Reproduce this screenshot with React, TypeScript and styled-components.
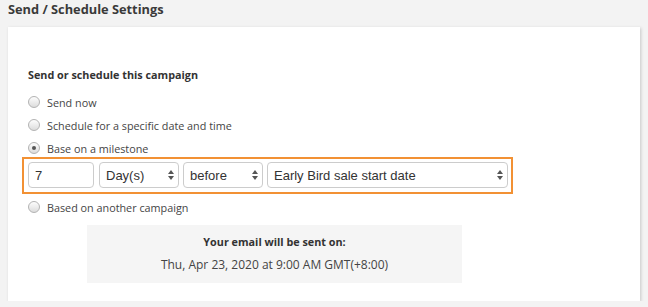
import * as React from "react"
import styled, { createGlobalStyle } from "styled-components"

const Global = createGlobalStyle`
  html, body {
    margin: 0;
    padding: 0;
    background: #f3f3f3;
  }
  body {
    font-family: "Open Sans", "Liberation Sans", sans-serif;
    color: #333;
  }
`

const Page = styled.div`
  display: flex;
  flex-direction: column;
  padding: 0 8px;
  width: 632px;
`

const Title = styled.h2`
  margin: 0;
  height: 27px;
  font-size: 12.8px;
  line-height: 18px;
  font-weight: 700;
  color: #3a3a3a;
`

const Card = styled.div`
  background: #fff;
  box-shadow: 1px 1px 3px rgba(0, 0, 0, 0.18);
  padding: 39px 20px 18px 20px;
  display: flex;
  flex-direction: column;
`

const Heading = styled.div`
  font-size: 10.8px;
  line-height: 18px;
  font-weight: 700;
  color: #333;
  margin-bottom: 9px;
`

const Options = styled.div`
  display: flex;
  flex-direction: column;
  gap: 5px;
`

const Option = styled.label`
  display: flex;
  align-items: center;
  height: 18px;
  gap: 7px;
  font-size: 10.8px;
  color: #444;
`

const Radio = styled.span<{ $checked?: boolean }>`
  width: 10px;
  height: 10px;
  border-radius: 50%;
  border: 1px solid #b3b3b3;
  background: linear-gradient(#fdfdfd, #dcdcdc);
  display: flex;
  align-items: center;
  justify-content: center;
  flex: none;

  &::after {
    content: "";
    display: ${(p) => (p.$checked ? "block" : "none")};
    width: 4px;
    height: 4px;
    border-radius: 50%;
    background: #555;
  }
`

const Milestone = styled.div`
  align-self: flex-start;
  display: flex;
  gap: 4px;
  margin-left: -6px;
  padding: 3px 3px 4px 4px;
  border: 2px solid #f29134;
`

const Field = styled.input`
  box-sizing: border-box;
  width: 66px;
  height: 26px;
  margin-right: 1px;
  padding: 0 6px;
  border: 1px solid #cccccc;
  border-radius: 4px;
  font-family: "Liberation Sans", Arial, sans-serif;
  font-size: 13px;
  color: #333;
  outline: none;
`

const SelectWrap = styled.div<{ $w: number }>`
  position: relative;
  width: ${(p) => p.$w}px;
  height: 26px;
`

const Select = styled.select`
  box-sizing: border-box;
  appearance: none;
  width: 100%;
  height: 100%;
  padding: 0 20px 0 6px;
  border: 1px solid #cccccc;
  border-radius: 4px;
  background: #fff;
  font-family: "Liberation Sans", Arial, sans-serif;
  font-size: 13px;
  color: #333;
  outline: none;
`

const Arrows = styled.svg`
  position: absolute;
  right: 5px;
  top: 8px;
  pointer-events: none;
`

const Another = styled(Option)`
  margin-top: 4px;
`

const Summary = styled.div`
  margin: 9px 0 0 59px;
  width: 375px;
  background: #f5f5f5;
  padding: 9px 0;
  display: flex;
  flex-direction: column;
  align-items: center;
`

const SummaryLabel = styled.div`
  font-size: 10.8px;
  line-height: 16px;
  font-weight: 700;
  color: #333;
`

const SummaryDate = styled.div`
  margin-top: 6px;
  font-size: 12px;
  line-height: 18px;
  color: #444;
`

const Dropdown = ({ width, value, options }: { width: number; value: string; options: string[] }) => (
  <SelectWrap $w={width}>
    <Select defaultValue={value}>
      {options.map((o) => (
        <option key={o}>{o}</option>
      ))}
    </Select>
    <Arrows width="6" height="10" viewBox="0 0 6 10">
      <path d="M3 0 L6 4 H0 Z" fill="#555" />
      <path d="M3 10 L6 6 H0 Z" fill="#555" />
    </Arrows>
  </SelectWrap>
)

export default function App() {
  return (
    <Page>
      <Global />
      <Title>Send / Schedule Settings</Title>
      <Card>
        <Heading>Send or schedule this campaign</Heading>
        <Options>
          <Option>
            <Radio />
            Send now
          </Option>
          <Option>
            <Radio />
            Schedule for a specific date and time
          </Option>
          <Option>
            <Radio $checked />
            Base on a milestone
          </Option>
        </Options>
        <Milestone>
          <Field defaultValue="7" />
          <Dropdown width={80} value="Day(s)" options={["Day(s)", "Week(s)", "Hour(s)"]} />
          <Dropdown width={80} value="before" options={["before", "after"]} />
          <Dropdown
            width={241}
            value="Early Bird sale start date"
            options={["Early Bird sale start date", "Event start date"]}
          />
        </Milestone>
        <Another>
          <Radio />
          Based on another campaign
        </Another>
        <Summary>
          <SummaryLabel>Your email will be sent on:</SummaryLabel>
          <SummaryDate>Thu, Apr 23, 2020 at 9:00 AM GMT(+8:00)</SummaryDate>
        </Summary>
      </Card>
    </Page>
  )
}
